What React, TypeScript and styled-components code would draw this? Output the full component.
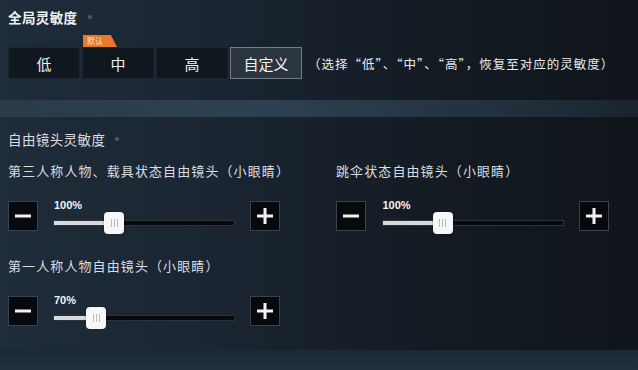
import { FC } from 'react';
import styled, { createGlobalStyle } from 'styled-components';

const GlobalStyle = createGlobalStyle`
  html, body {
    margin: 0;
    padding: 0;
    background: #121920;
  }
  body {
    font-family: "Noto Sans CJK SC", "Noto Sans", sans-serif;
    color: #e6e9ec;
  }
`;

type SliderProps = {
  value: number;
};

const SENSE_OPTIONS = ['低', '中', '高', '自定义'];

const SliderControl: FC<SliderProps> = ({ value }) => {
  // thumb position inside the track, in percent of the track width
  const pos = Math.min(value * 0.335, 100);
  return (
    <SliderRow>
      <StepButton aria-label="minus">
        <svg width="18" height="18" viewBox="0 0 18 18">
          <rect x="1" y="7.5" width="16" height="3" fill="#f2f2f2" />
        </svg>
      </StepButton>
      <TrackArea>
        <ValueLabel>{value}%</ValueLabel>
        <Track>
          <Fill style={{ width: `${pos}%` }} />
          <Thumb style={{ left: `calc(${pos}% - 10px)` }}>
            <Grip />
            <Grip />
            <Grip />
          </Thumb>
        </Track>
      </TrackArea>
      <StepButton aria-label="plus">
        <svg width="18" height="18" viewBox="0 0 18 18">
          <rect x="1" y="7.5" width="16" height="3" fill="#f2f2f2" />
          <rect x="7.5" y="1" width="3" height="16" fill="#f2f2f2" />
        </svg>
      </StepButton>
    </SliderRow>
  );
};

export default function App() {
  return (
    <>
      <GlobalStyle />
      <Page>
        <Section>
          <SectionTitle>
            全局灵敏度
            <Dot />
          </SectionTitle>
          <PresetRow>
            <Segments>
              {SENSE_OPTIONS.map((label) => (
                <Segment key={label} active={label === '自定义'}>
                  {label === '中' && <Badge>默认</Badge>}
                  {label}
                </Segment>
              ))}
            </Segments>
            <Hint>（选择“低”、“中”、“高”，恢复至对应的灵敏度）</Hint>
          </PresetRow>
        </Section>
        <Band />
        <Section2>
          <SectionTitle small>
            自由镜头灵敏度
            <Dot />
          </SectionTitle>
          <Grid>
            <Item>
              <ItemLabel>第三人称人物、载具状态自由镜头（小眼睛）</ItemLabel>
              <SliderControl value={100} />
            </Item>
            <Item>
              <ItemLabel>跳伞状态自由镜头（小眼睛）</ItemLabel>
              <SliderControl value={100} />
            </Item>
            <Item>
              <ItemLabel>第一人称人物自由镜头（小眼睛）</ItemLabel>
              <SliderControl value={70} />
            </Item>
          </Grid>
        </Section2>
        <BottomBand />
      </Page>
    </>
  );
}

const Page = styled.div`
  width: 638px;
  height: 370px;
  overflow: hidden;
  display: flex;
  flex-direction: column;
  background: linear-gradient(90deg, #1f2c39 0%, #1a2531 35%, #131a22 70%, #10151b 100%);
`;

const Section = styled.div`
  padding: 9px 8px 0;
  height: 100px;
  flex-shrink: 0;
  box-sizing: border-box;
`;

const SectionTitle = styled.div<{ small?: boolean }>`
  display: flex;
  align-items: center;
  gap: 10px;
  height: 16px;
  font-size: 13.5px;
  font-weight: ${(p) => (p.small ? 400 : 700)};
  color: ${(p) => (p.small ? '#d9dde1' : '#eef0f2')};
  letter-spacing: 0.4px;
`;

const Dot = styled.span`
  width: 4px;
  height: 4px;
  border-radius: 50%;
  background: #4a5a68;
`;

const PresetRow = styled.div`
  display: flex;
  align-items: center;
  gap: 6px;
  margin-top: 22px;
`;

const Segments = styled.div`
  display: flex;
  gap: 2px;
`;

const Segment = styled.div<{ active?: boolean }>`
  position: relative;
  width: 72px;
  height: 32px;
  box-sizing: border-box;
  display: flex;
  align-items: center;
  justify-content: center;
  font-size: 15px;
  color: #f0f2f4;
  background: ${(p) => (p.active ? '#2b3540' : '#0f171f')};
  border: 1px solid ${(p) => (p.active ? '#737c86' : '#1c252f')};
`;

const Badge = styled.span`
  position: absolute;
  left: 0;
  top: -13px;
  height: 12px;
  width: 34px;
  padding-left: 4px;
  box-sizing: border-box;
  font-size: 8px;
  line-height: 12px;
  color: #fbe3c8;
  background: #e8782a;
  clip-path: polygon(0 0, 82% 0, 100% 100%, 0 100%);
`;

const Hint = styled.div`
  font-size: 12.5px;
  letter-spacing: 1px;
  color: #e8ebee;
  white-space: nowrap;
`;

const Band = styled.div`
  height: 17px;
  flex-shrink: 0;
  background: linear-gradient(90deg, #2a3b4a 0%, #2e4152 40%, #233241 75%, #1a2430 100%);
`;

const Section2 = styled.div`
  padding: 14px 8px 0;
  height: 233px;
  flex-shrink: 0;
  box-sizing: border-box;
`;

const Grid = styled.div`
  display: grid;
  grid-template-columns: 272px 273px;
  column-gap: 56px;
  row-gap: 26px;
  margin-top: 16px;
`;

const Item = styled.div`
  display: flex;
  flex-direction: column;
  gap: 21px;
`;

const ItemLabel = styled.div`
  font-size: 13px;
  color: #d9dde1;
  letter-spacing: 1.1px;
  height: 16px;
  line-height: 16px;
  white-space: nowrap;
`;

const SliderRow = styled.div`
  display: flex;
  align-items: center;
  justify-content: space-between;
  height: 32px;
`;

const StepButton = styled.div`
  width: 30px;
  height: 30px;
  box-sizing: border-box;
  display: flex;
  align-items: center;
  justify-content: center;
  background: #07090c;
  border: 1px solid #3a424b;
`;

const TrackArea = styled.div`
  position: relative;
  width: 182px;
  height: 32px;
`;

const ValueLabel = styled.div`
  position: absolute;
  left: 1px;
  top: -1px;
  font-size: 11px;
  font-weight: 700;
  color: #f4f4f4;
  font-family: "Liberation Sans", sans-serif;
`;

const Track = styled.div`
  position: absolute;
  left: 0;
  right: 0;
  top: 20px;
  height: 6px;
  box-sizing: border-box;
  background: #07090b;
  border: 1px solid #2c333b;
`;

const Fill = styled.div`
  height: 100%;
  background: #d7d9db;
`;

const Thumb = styled.div`
  position: absolute;
  top: -9px;
  width: 20px;
  height: 22px;
  border-radius: 4px;
  background: #f7f7f7;
  display: flex;
  align-items: center;
  justify-content: center;
  gap: 2px;
  box-shadow: 0 0 2px rgba(0, 0, 0, 0.5);
`;

const Grip = styled.span`
  width: 1px;
  height: 8px;
  background: #b9bcbf;
`;

const BottomBand = styled.div`
  height: 20px;
  flex-shrink: 0;
  background: linear-gradient(180deg, #1c2834 0%, #223140 100%);
`;
